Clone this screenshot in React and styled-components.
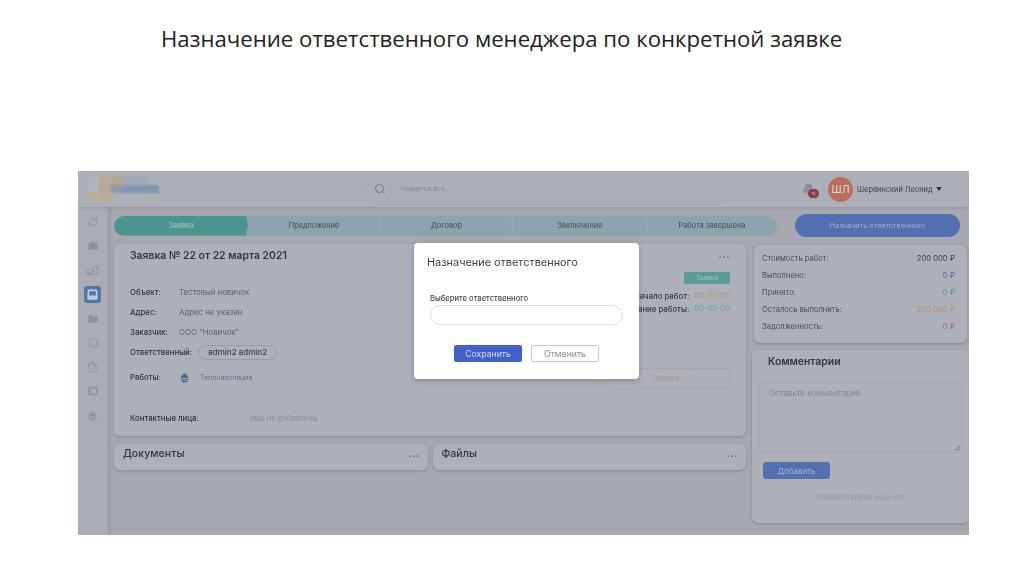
import React from 'react'
import styled, { createGlobalStyle } from 'styled-components'
import { Search, RotateCw, Briefcase, Folder, Square, FileCheck, Bell } from 'lucide-react'

const GlobalStyle = createGlobalStyle`
  * { box-sizing: border-box; }
  html, body { margin: 0; padding: 0; background: #fff; }
  body { font-family: Inter, "Liberation Sans", sans-serif; }
`

const Slide = styled.div`
  width: 1024px;
  height: 574px;
  overflow: hidden;
  background: #fff;
  padding: 25px 0 0 78px;
`

const Title = styled.h1`
  margin: 0 0 112px 83px;
  height: 34px;
  font: 400 22.2px/28px "Open Sans", sans-serif;
  color: #222;
  white-space: nowrap;
`

const Shot = styled.div`
  position: relative;
  width: 891px;
  height: 364px;
  overflow: hidden;
  background: #a5a8af;
  display: flex;
  flex-direction: column;
`

const TopBar = styled.header`
  height: 36px;
  flex: none;
  background: #acafb7;
  display: flex;
  align-items: center;
  box-shadow: 0 1px 3px rgba(90, 95, 105, .25);
  filter: blur(0.5px);
  z-index: 1;
`

const Logo = styled.div`
  width: 72px;
  height: 26px;
  margin: 0 0 0 9px;
  flex: none;
  display: grid;
  grid-template-columns: repeat(6, 12px);
  grid-template-rows: repeat(3, 1fr);
  filter: blur(1px);
`

const LogoCell = styled.span`
  background: ${p => p.$c};
`

const SearchWrap = styled.div`
  margin-left: 208px;
  width: 366px;
  height: 25px;
  border: 1px solid #a7aab2;
  border-radius: 13px;
  display: flex;
  align-items: center;
  gap: 9px;
  font-size: 6.5px;
  color: #85888f;
`

const SearchBtn = styled.span`
  width: 25px;
  height: 25px;
  margin-left: -1px;
  border-radius: 50%;
  border: 1px solid #a7aab2;
  display: flex;
  align-items: center;
  justify-content: center;
  color: #72757e;
`

const BellWrap = styled.div`
  position: relative;
  margin-left: 69px;
  width: 16px;
  color: #8c8f97;
  display: flex;
`

const BellBadge = styled.span`
  position: absolute;
  left: 6px;
  top: 6px;
  width: 11px;
  height: 9px;
  border-radius: 5px;
  background: #8e3a4c;
  color: #d8c4c8;
  font-size: 4px;
  line-height: 9px;
  text-align: center;
`

const Avatar = styled.div`
  margin-left: 10px;
  width: 25px;
  height: 25px;
  border-radius: 50%;
  background: #b76e5c;
  color: #dccfca;
  font-size: 10.5px;
  font-weight: 500;
  display: flex;
  align-items: center;
  justify-content: center;
`

const UserName = styled.span`
  margin-left: 4px;
  font-size: 7.4px;
  color: #3c3f47;
  white-space: nowrap;
`

const Caret = styled.span`
  margin-left: 3px;
  border: 3px solid transparent;
  border-top: 4px solid #33363d;
  border-bottom: 0;
`

const Body = styled.div`
  flex: 1;
  display: flex;
  min-height: 0;
  filter: blur(0.5px);
`

const Sidebar = styled.nav`
  width: 30px;
  flex: none;
  background: #a9acb4;
  box-shadow: 1px 0 3px rgba(90, 95, 105, .3);
  display: flex;
  flex-direction: column;
  align-items: center;
  padding: 6px 0 0 0;
  gap: 6.65px;
`

const NavItem = styled.span`
  width: 17.6px;
  height: 17.6px;
  margin-left: -1px;
  border-radius: 3px;
  display: flex;
  align-items: center;
  justify-content: center;
  background: ${p => (p.$active ? '#4d79aa' : 'transparent')};
  color: ${p => (p.$active ? '#c3cdd8' : p.$tone || '#8f929b')};
`

const Content = styled.main`
  flex: 1;
  min-width: 0;
  padding: 7px 0 0 6px;
`

const StepRow = styled.div`
  display: flex;
  align-items: center;
  height: 23px;
`

const Stepper = styled.div`
  width: 663px;
  height: 20px;
  display: flex;
  border-radius: 10px;
  overflow: hidden;
  background: #8ca3af;
`

const Step = styled.div`
  position: relative;
  width: ${p => p.$w}px;
  flex: none;
  display: flex;
  align-items: center;
  justify-content: center;
  font-size: 7.4px;
  color: ${p => (p.$active ? '#a5c3c0' : '#3f4c55')};
  background: ${p => (p.$active ? '#4c9490' : 'transparent')};
  clip-path: ${p => (p.$active ? 'polygon(0 0, calc(100% - 2px) 0, 100% 50%, calc(100% - 2px) 100%, 0 100%)' : 'none')};
`

const StepEdge = styled.svg`
  position: absolute;
  right: -1px;
  top: 0;
  width: 3px;
  height: 20px;
`

const AssignBtn = styled.div`
  margin-left: 18px;
  width: 165px;
  height: 23px;
  border-radius: 12px;
  background: #5570b0;
  color: #a0adcc;
  font-size: 7.3px;
  display: flex;
  align-items: center;
  justify-content: center;
`

const Columns = styled.div`
  display: flex;
  margin-top: 7px;
`

const LeftCol = styled.div`
  width: 632px;
  flex: none;
`

const RightCol = styled.div`
  margin-left: 6px;
  width: 217px;
  flex: none;
`

const Card = styled.section`
  background: #adb0b8;
  border-radius: 6px;
  box-shadow: 0 1px 3px rgba(80, 85, 95, .4);
`

const MainCard = styled(Card)`
  height: 192px;
  padding: 5px 16px 0 16px;
`

const CardHead = styled.div`
  display: flex;
  align-items: center;
  justify-content: space-between;
  height: 12px;
`

const CardTitle = styled.h2`
  margin: 0;
  font-size: 10.4px;
  font-weight: 600;
  color: #32353c;
  white-space: nowrap;
`

const Dots = styled.span`
  font-size: 10px;
  font-weight: 700;
  letter-spacing: .5px;
  line-height: 6px;
  height: 8px;
  color: #6d7079;
`

const MainBody = styled.div`
  display: flex;
  justify-content: space-between;
  height: 151px;
`

const Fields = styled.div`
  display: flex;
  flex-direction: column;
  padding-top: 21px;
`

const Field = styled.div`
  display: flex;
  align-items: center;
  height: ${p => p.$h || 20}px;
  font-size: 7.8px;
  color: #3b3e46;
  white-space: nowrap;
`

const Label = styled.span`
  min-width: 49px;
  flex: none;
  font-weight: 500;
  color: #31343b;
`

const Value = styled.span`
  color: #5f626b;
`

const Pill = styled.span`
  margin-left: 6px;
  width: 79px;
  height: 15px;
  border: 1px solid #989ba4;
  border-radius: 8px;
  display: flex;
  align-items: center;
  justify-content: center;
  font-size: 8px;
  font-weight: 500;
  color: #3d4048;
`

const WorkIcon = styled.span`
  display: flex;
  color: #4d6a8c;
`

const WorkLink = styled.span`
  margin-left: 10px;
  font-size: 7px;
  color: #60758d;
`

const Status = styled.div`
  display: flex;
  flex-direction: column;
  align-items: flex-end;
  padding-top: 11px;
`

const Badge = styled.span`
  width: 46px;
  height: 12px;
  border-radius: 2px;
  background: #5a9a97;
  color: #a0c2c0;
  font-size: 6.5px;
  display: flex;
  align-items: center;
  justify-content: center;
`

const DateRow = styled.div`
  display: flex;
  align-items: center;
  justify-content: flex-end;
  gap: 5px;
  height: 13px;
  margin-top: ${p => p.$mt || 0}px;
  font-size: 7.8px;
  font-weight: 500;
  color: #35383f;
  white-space: nowrap;
`

const DateVal = styled.span`
  font-size: 7.6px;
  font-weight: 400;
  color: ${p => p.$c};
`

const Dashed = styled.div`
  margin-top: 53px;
  width: 127px;
  height: 21px;
  border: 1px dashed #a6a186;
  border-radius: 2px;
  color: #ad9078;
  font-size: 7.5px;
  display: flex;
  align-items: center;
  justify-content: center;
`

const Contacts = styled(Field)`
  height: 12px;
`

const ContactLabel = styled(Label)`
  width: 120px;
`

const ContactValue = styled(Value)`
  font-size: 7.4px;
  color: #888b94;
`

const SubRow = styled.div`
  display: flex;
  gap: 5px;
  margin-top: 8px;
`

const SubCard = styled(Card)`
  flex: 1;
  height: 26px;
  padding: 0 8px 7px 9px;
  display: flex;
  align-items: center;
  justify-content: space-between;
`

const SubTitle = styled.h3`
  margin: 0;
  font-size: 10.6px;
  font-weight: 500;
  color: #32353c;
`

const StatCard = styled(Card)`
  margin-left: 2px;
  width: 213px;
  height: 98px;
  padding: 5px 12px 0 8px;
  margin-top: 1px;
`

const StatRow = styled.div`
  display: flex;
  justify-content: space-between;
  align-items: center;
  height: 17px;
  font-size: 7.6px;
  color: #4a4d55;
  white-space: nowrap;
`

const StatVal = styled.span`
  color: ${p => p.$c};
`

const CommentCard = styled(Card)`
  margin-top: 7px;
  height: 173px;
  padding: 0 7px 0 7px;
`

const CommentTitle = styled.h3`
  margin: 0;
  padding: 5px 0 0 9px;
  height: 32px;
  font-size: 10.4px;
  font-weight: 600;
  color: #32353c;
`

const CommentBox = styled.div`
  position: relative;
  height: 71px;
  border: 1px solid #a0aab0;
  border-radius: 2px;
  padding: 5px 9px;
  font-size: 8px;
  color: #858892;
`

const Grip = styled.span`
  position: absolute;
  right: 1px;
  bottom: 1px;
  width: 6px;
  height: 6px;
  background: linear-gradient(135deg, transparent 50%, #6f727b 50%, #6f727b 60%, transparent 60%, transparent 75%, #6f727b 75%, #6f727b 85%, transparent 85%);
`

const AddBtn = styled.div`
  margin: 9px 0 0 4px;
  width: 67px;
  height: 17px;
  border-radius: 3px;
  background: #5570b0;
  color: #a5b1d0;
  font-size: 8px;
  display: flex;
  align-items: center;
  justify-content: center;
`

const Empty = styled.div`
  margin-top: 14px;
  text-align: center;
  font-size: 7.6px;
  color: #969aa2;
`

/* modal sits over the dimmed page */
const Modal = styled.div`
  position: absolute;
  left: 336px;
  top: 72px;
  width: 225px;
  height: 136px;
  background: #fff;
  border-radius: 4px;
  box-shadow: 0 2px 5px rgba(60, 60, 70, .35);
  padding: 12px 13px 0 13px;
  filter: blur(0.3px);
  z-index: 2;
`

const ModalTitle = styled.h2`
  margin: 0;
  font-size: 10.9px;
  font-weight: 400;
  line-height: 15px;
  color: #3c3f49;
  white-space: nowrap;
`

const ModalLabel = styled.div`
  margin: 24px 0 0 3px;
  font-size: 7.6px;
  line-height: 10px;
  font-weight: 500;
  color: #45484f;
`

const ModalInput = styled.div`
  margin: 1px 0 0 3px;
  width: 193px;
  height: 20px;
  border: 1px solid #dcdde1;
  border-radius: 10px;
`

const ModalActions = styled.div`
  display: flex;
  justify-content: center;
  gap: 9px;
  margin: 20px 0 0 0;
`

const SaveBtn = styled.div`
  width: 68px;
  height: 17px;
  border-radius: 2px;
  background: #4361c9;
  color: #d5dcf3;
  font-size: 8.7px;
  display: flex;
  align-items: center;
  justify-content: center;
`

const CancelBtn = styled(SaveBtn)`
  background: #fff;
  border: 1px solid #c8c8c8;
  color: #8c8f96;
`

const ActiveIcon = () => (
  <svg width="11" height="11" viewBox="0 0 24 24" fill="none" stroke="currentColor" strokeWidth="3.5">
    <rect x="3" y="3" width="18" height="18" rx="2" />
    <path d="M3 16h18v5H3z" fill="currentColor" />
  </svg>
)

const HelmetIcon = ({ size = 11 }) => (
  <svg width={size} height={size} viewBox="0 0 24 24" fill="currentColor">
    <path d="M4 13a8 8 0 0 1 6-7.7V3h4v2.3A8 8 0 0 1 20 13z" />
    <rect x="2" y="14.5" width="20" height="2.5" rx="1" />
    <path d="M5 18.5h14a7 4.5 0 0 1-14 0z" />
  </svg>
)

const HouseIcon = () => (
  <svg width="13" height="11" viewBox="0 0 28 24" fill="none" stroke="currentColor" strokeWidth="2">
    <path d="M2 21v-8l6-5 6 5v8z" />
    <path d="M16 21V4h9v17z" />
    <path d="M6 21v-5h4v5" />
  </svg>
)

const BoxIcon = () => (
  <svg width="10" height="10" viewBox="0 0 24 24" fill="none" stroke="currentColor" strokeWidth="4">
    <rect x="3" y="4" width="18" height="16" rx="1" />
  </svg>
)

const logoCells = [
  '#b0b3ba', '#b7ab98', '#b5a58d', '#9fa9b8', '#9fa9b8', '#a9aeb8',
  '#b3b4b8', '#b5a896', '#8e9bad', '#7f95ad', '#7f95ad', '#7f95ad',
  '#b9ae9b', '#b8ac98', '#b0b0b3', '#aeb1b8', '#aeb1b8', '#adb0b6',
]
const navItems = [
  <RotateCw size={10} />,
  <Briefcase size={10} fill="currentColor" />,
  <HouseIcon />,
  <ActiveIcon />,
  <Folder size={10} fill="currentColor" />,
  <Square size={10} />,
  <FileCheck size={11} />,
  <BoxIcon />,
  <HelmetIcon />,
]
const steps = [['Заявка', 134], ['Предложение', 132], ['Договор', 133], ['Заключение', 134], ['Работа завершена', 130]]
const stats = [
  ['Стоимость работ:', '200 000 ₽', '#3f4249'],
  ['Выполнено:', '0 ₽', '#56709f'],
  ['Принято:', '0 ₽', '#5a968c'],
  ['Осталось выполнить:', '200 000 ₽', '#b0936e'],
  ['Задолженность:', '0 ₽', '#a86866'],
]

export default function App() {
  return (
    <Slide>
      <GlobalStyle />
      <Title>Назначение ответственного менеджера по конкретной заявке</Title>
      <Shot>
        <TopBar>
          <Logo>
            {logoCells.map((c, i) => <LogoCell key={i} $c={c} />)}
          </Logo>
          <SearchWrap>
            <SearchBtn><Search size={12} /></SearchBtn>
            Найдется все...
          </SearchWrap>
          <BellWrap>
            <Bell size={13} fill="currentColor" />
            <BellBadge>14</BellBadge>
          </BellWrap>
          <Avatar>ШЛ</Avatar>
          <UserName>Шервинский Леонид</UserName>
          <Caret />
        </TopBar>
        <Body>
          <Sidebar>
            {navItems.map((icon, i) => (
              <NavItem key={i} $active={i === 3} $tone={i === 8 ? '#8a95a6' : undefined}>{icon}</NavItem>
            ))}
          </Sidebar>
          <Content>
            <StepRow>
              <Stepper>
                {steps.map(([name, w], i) => (
                  <Step key={name} $w={w} $active={i === 0}>
                    {name}
                    {i > 0 && i < 4 && (
                      <StepEdge viewBox="0 0 3 20">
                        <path d="M0 0 Q3 7 3 10 Q3 13 0 20" fill="none" stroke="#a2b4be" strokeWidth=".8" />
                      </StepEdge>
                    )}
                  </Step>
                ))}
              </Stepper>
              <AssignBtn>Назначить ответственного</AssignBtn>
            </StepRow>
            <Columns>
              <LeftCol>
                <MainCard>
                  <CardHead>
                    <CardTitle>Заявка № 22 от 22 марта 2021</CardTitle>
                    <Dots>...</Dots>
                  </CardHead>
                  <MainBody>
                    <Fields>
                      <Field><Label>Объект:</Label><Value>Тестовый новичок</Value></Field>
                      <Field><Label>Адрес:</Label><Value>Адрес не указан</Value></Field>
                      <Field><Label>Заказчик:</Label><Value>ООО "Новичок"</Value></Field>
                      <Field><Label>Ответственный:</Label><Pill>admin2 admin2</Pill></Field>
                      <Field $h={30}>
                        <Label>Работы:</Label>
                        <WorkIcon><HelmetIcon /></WorkIcon>
                        <WorkLink>Теплоизоляция</WorkLink>
                      </Field>
                    </Fields>
                    <Status>
                      <Badge>Заявка</Badge>
                      <DateRow $mt={5}>Начало работ: <DateVal $c="#b0987a">00-00-00</DateVal></DateRow>
                      <DateRow>Окончание работы: <DateVal $c="#6fa09c">00-00-00</DateVal></DateRow>
                      <Dashed>Заявка</Dashed>
                    </Status>
                  </MainBody>
                  <Contacts><ContactLabel>Контактные лица:</ContactLabel><ContactValue>еще не добавлены</ContactValue></Contacts>
                </MainCard>
                <SubRow>
                  <SubCard><SubTitle>Документы</SubTitle><Dots>...</Dots></SubCard>
                  <SubCard><SubTitle>Файлы</SubTitle><Dots>...</Dots></SubCard>
                </SubRow>
              </LeftCol>
              <RightCol>
                <StatCard>
                  {stats.map(([name, val, c]) => (
                    <StatRow key={name}>{name}<StatVal $c={c}>{val}</StatVal></StatRow>
                  ))}
                </StatCard>
                <CommentCard>
                  <CommentTitle>Комментарии</CommentTitle>
                  <CommentBox>Оставьте комментарий...<Grip /></CommentBox>
                  <AddBtn>Добавить</AddBtn>
                  <Empty>Комментариев еще нет</Empty>
                </CommentCard>
              </RightCol>
            </Columns>
          </Content>
        </Body>
        <Modal>
          <ModalTitle>Назначение ответственного</ModalTitle>
          <ModalLabel>Выберите ответственного</ModalLabel>
          <ModalInput />
          <ModalActions>
            <SaveBtn>Сохранить</SaveBtn>
            <CancelBtn>Отменить</CancelBtn>
          </ModalActions>
        </Modal>
      </Shot>
    </Slide>
  )
}
